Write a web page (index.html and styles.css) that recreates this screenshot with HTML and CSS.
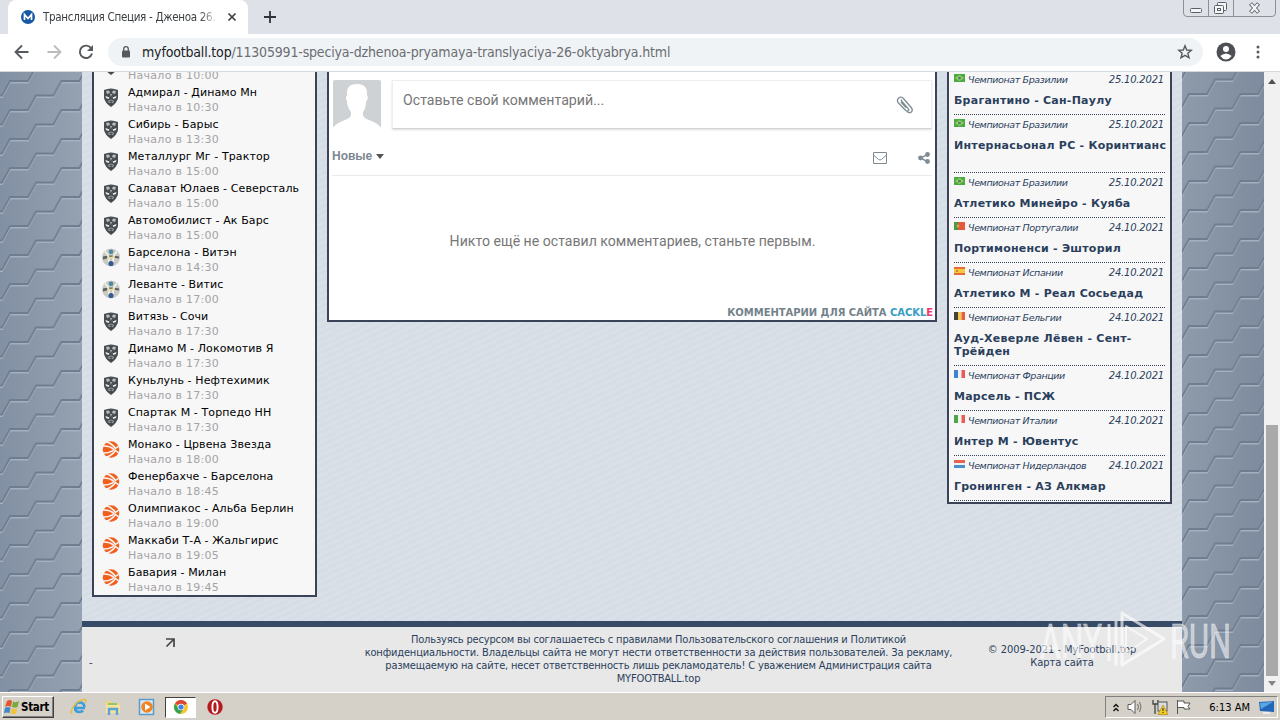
FILE: index.html
```html
<!DOCTYPE html>
<html lang="ru">
<head>
    <meta charset="UTF-8">
    <title>Трансляция Специя - Дженоа 26.10</title>
    <link rel="stylesheet" href="styles.css">
</head>
<body>
<svg class="defs" aria-hidden="true">
    <defs>
        <linearGradient id="steelLeft"><stop offset="0" stop-color="#8290a3"/><stop offset="1" stop-color="#95a2b2"/></linearGradient>
        <linearGradient id="steelRight"><stop offset="0" stop-color="#8e9bab"/><stop offset="1" stop-color="#7e8b9e"/></linearGradient>
        <pattern id="hexLeft" width="51.4" height="29" patternUnits="userSpaceOnUse" patternTransform="translate(10 9)">
            <g id="hexLines" fill="none" stroke-width="1.8">
                <path stroke="#a4b0be" d="M-8 16L0 1.5H18L26 -13M-8 45L0 30.5H18L26 16H43.4L51.4 1.5H60M43.4 45L51.4 30.5H60"/>
                <path stroke="#6f7d90" d="M-8 14.5L0 0H18L26 -14.5M-8 43.5L0 29H18L26 14.5H43.4L51.4 0H60M43.4 43.5L51.4 29H60"/>
            </g>
        </pattern>
        <pattern id="hexRight" width="51.4" height="29" patternUnits="userSpaceOnUse" patternTransform="translate(7 22)"><use href="#hexLines"/></pattern>
        <symbol id="khl" viewBox="0 0 16 19">
            <path d="M1 2Q8-1 15 2V10Q14 15 8 19Q2 15 1 10Z" fill="#4a4d50"/>
            <path d="M3 3L6 2.5L7 5L4 6ZM13 3L10 2.5L9 5L12 6Z" fill="#b9bcbe"/>
            <path d="M2.5 8L6.5 9.5L5.5 11L3 10ZM13.5 8L9.5 9.5L10.5 11L13 10Z" fill="#e6e6e6"/>
            <path d="M7 6H9L8 9ZM5 13L8 11.5L11 13L10 15H6Z" fill="#b2b5b8"/>
            <path d="M6 13.8H10M8 12V17" stroke="#333" stroke-width=".8"/>
        </symbol>
        <symbol id="vtb" viewBox="0 0 18 18">
            <circle cx="9" cy="9" r="9" fill="#c9cac5"/>
            <path d="M1 8Q9 6 17 8L17 10Q9 8 1 11Z" fill="#59645f"/>
            <path d="M3 3Q8 7 7 16M15 3Q10 7 11 16" stroke="#f3f1e5" stroke-width="1.8" fill="none"/>
            <circle cx="9" cy="3.3" r="2.3" fill="#4c8b9f"/><circle cx="9" cy="15" r="2.6" fill="#315b91"/>
            <path d="M5 9.500L13 8.500" stroke="#e9d99b" stroke-width="1.500"/>
        </symbol>
        <symbol id="euro" viewBox="0 0 18 18">
            <circle cx="9" cy="9" r="8.3" fill="#f0611d"/>
            <path d="M0 5.500Q8 5 12 9Q8 13 0 12.500M4 1Q10 3 13.500 8L18 4.500M4 17Q10 15 13.500 10L18 13.500" fill="none" stroke="#f7f7f8" stroke-width="1.500"/>
        </symbol>
        <symbol id="br" viewBox="0 0 11 8"><path fill="#4caa45" d="M0 0H11V8H0Z"/><path fill="#a3cc62" d="M5.5 1L10 4L5.5 7L1 4Z"/><circle cx="5.5" cy="4" r="1.6" fill="#438a70"/></symbol>
        <symbol id="pt" viewBox="0 0 11 8"><path fill="#e55a3b" d="M0 0H11V8H0Z"/><path fill="#4c9945" d="M0 0H4V8H0Z"/><circle cx="4" cy="4" r="1.4" fill="#d2a94d"/></symbol>
        <symbol id="es" viewBox="0 0 11 8"><path fill="#e66b37" d="M0 0H11V8H0Z"/><path fill="#f7c83b" d="M0 2H11V6H0Z"/><path fill="#c78636" d="M2 3H4V5H2Z"/></symbol>
        <symbol id="be" viewBox="0 0 11 8"><path fill="#444039" d="M0 0H4V8H0Z"/><path fill="#f4c84c" d="M4 0H7.5V8H4Z"/><path fill="#e65d42" d="M7.5 0H11V8H7.5Z"/></symbol>
        <symbol id="fr" viewBox="0 0 11 8"><path fill="#3d83cf" d="M0 0H4V8H0Z"/><path fill="#eef1f6" d="M4 0H7.5V8H4Z"/><path fill="#ed5a55" d="M7.5 0H11V8H7.5Z"/></symbol>
        <symbol id="it" viewBox="0 0 11 8"><path fill="#4aa84c" d="M0 0H4V8H0Z"/><path fill="#eff4ec" d="M4 0H7.5V8H4Z"/><path fill="#ed5a55" d="M7.5 0H11V8H7.5Z"/></symbol>
        <symbol id="nl" viewBox="0 0 11 8"><path fill="#e5654d" d="M0 0H11V3H0Z"/><path fill="#eef1f6" d="M0 3H11V5H0Z"/><path fill="#4990cc" d="M0 5H11V8H0Z"/></symbol>
    </defs>
</svg>

<header class="tabstrip">
    <div class="tab">
        <svg width="14" height="14" viewBox="0 0 14 14"><circle cx="7" cy="7" r="7" fill="#1757a5"/><path d="M3.5 10V4.5L7 8.5L10.500 4.500V10" fill="none" stroke="#fff" stroke-width="1.7"/></svg>
        <span class="tab-title">Трансляция Специя - Дженоа 26.10</span>
        <svg width="10" height="10" viewBox="0 0 10 10"><path d="M1.500 1.500L8.500 8.500M8.500 1.500L1.500 8.500" stroke="#3c4043" stroke-width="1.7"/></svg>
    </div>
    <svg class="new-tab" width="12" height="12" viewBox="0 0 12 12"><path d="M6 0V12M0 6H12" stroke="#30343a" stroke-width="1.8"/></svg>
    <svg class="win-buttons" width="94" height="17" viewBox="0 0 94 17">
        <path d="M.5 0V13Q.5 16.500 4 16.500H89Q92.500 16.500 92.500 13V0M25.500 0V16M50.500 0V16" fill="none" stroke="#8d9197"/>
        <rect x="7.500" y="8.500" width="11" height="4" rx="1" fill="#f5f6f8" stroke="#5c6066"/>
        <rect x="34.500" y="2.500" width="9" height="8" rx="1" fill="#f5f6f8" stroke="#5c6066"/>
        <rect x="31.500" y="5.500" width="9" height="8" rx="1" fill="#f5f6f8" stroke="#5c6066"/><rect x="34.500" y="8.500" width="3" height="2" fill="#fff" stroke="#5c6066"/>
        <path d="M67.500 3.500L75.500 12.500M75.500 3.500L67.500 12.500" stroke="#5c6066" stroke-width="4"/><path d="M68 4L75 12M75 4L68 12" stroke="#f5f6f8" stroke-width="2.200"/>
    </svg>
</header>

<nav class="toolbar">
    <svg width="16" height="16" viewBox="0 0 16 16"><path d="M14.500 8H2M8 1.500L1.500 8L8 14.500" fill="none" stroke="#56595d" stroke-width="1.800"/></svg>
    <svg width="16" height="16" viewBox="0 0 16 16"><path d="M1.500 8H14M8 1.500L14.500 8L8 14.500" fill="none" stroke="#b9bbbd" stroke-width="1.800"/></svg>
    <svg width="16" height="16" viewBox="0 0 16 16"><path d="M13.300 4.500A6.200 6.200 0 1 0 14 9.500" fill="none" stroke="#56595d" stroke-width="1.900"/><path d="M15 1V7H9Z" fill="#56595d"/></svg>
    <div class="omnibox">
        <svg width="10" height="12" viewBox="0 0 10 12"><rect x="1" y="4.500" width="8" height="7" rx="1" fill="#56595d"/><path d="M2.700 5V3A2.300 2.300 0 0 1 7.300 3V5" fill="none" stroke="#56595d" stroke-width="1.300"/></svg>
        <span class="url"><b>myfootball.top</b>/11305991-speciya-dzhenoa-pryamaya-translyaciya-26-oktyabrya.html</span>
        <svg width="16" height="16" viewBox="0 0 16 16"><path d="M8 1.800L9.700 6L14.300 6.300L10.800 9.200L12 13.800L8 11.300L4 13.800L5.200 9.200L1.700 6.300L6.300 6Z" fill="none" stroke="#56595d" stroke-width="1.400"/></svg>
    </div>
    <svg width="20" height="20" viewBox="0 0 20 20"><circle cx="10" cy="10" r="9.500" fill="#4c5054"/><circle cx="10" cy="7" r="3" fill="#fff"/><path d="M4.300 14Q10 9 15.700 14Q13 17.500 10 17.500T4.300 14Z" fill="#fff"/></svg>
    <svg class="dots" width="4" height="14" viewBox="0 0 4 14"><g fill="#56595d"><circle cx="2" cy="2" r="1.500"/><circle cx="2" cy="7" r="1.500"/><circle cx="2" cy="12" r="1.500"/></g></svg>
</nav>

<main class="page">
    <svg class="side" width="82" height="620"><rect width="82" height="620" fill="url(#steelLeft)"/><rect width="82" height="620" fill="url(#hexLeft)"/></svg>

    <div class="site">
        <div class="columns">
            <section class="panel games">
                <ul>
                    <li><svg><use href="#khl"/></svg><div><a></a><small>Начало в 10:00</small></div></li>
                    <li><svg><use href="#khl"/></svg><div><a>Адмирал - Динамо Мн</a><small>Начало в 10:30</small></div></li>
                    <li><svg><use href="#khl"/></svg><div><a>Сибирь - Барыс</a><small>Начало в 13:30</small></div></li>
                    <li><svg><use href="#khl"/></svg><div><a>Металлург Мг - Трактор</a><small>Начало в 15:00</small></div></li>
                    <li><svg><use href="#khl"/></svg><div><a>Салават Юлаев - Северсталь</a><small>Начало в 15:00</small></div></li>
                    <li><svg><use href="#khl"/></svg><div><a>Автомобилист - Ак Барс</a><small>Начало в 15:00</small></div></li>
                    <li><svg><use href="#vtb"/></svg><div><a>Барселона - Витэн</a><small>Начало в 14:30</small></div></li>
                    <li><svg><use href="#vtb"/></svg><div><a>Леванте - Витис</a><small>Начало в 17:00</small></div></li>
                    <li><svg><use href="#khl"/></svg><div><a>Витязь - Сочи</a><small>Начало в 17:30</small></div></li>
                    <li><svg><use href="#khl"/></svg><div><a>Динамо М - Локомотив Я</a><small>Начало в 17:30</small></div></li>
                    <li><svg><use href="#khl"/></svg><div><a>Куньлунь - Нефтехимик</a><small>Начало в 17:30</small></div></li>
                    <li><svg><use href="#khl"/></svg><div><a>Спартак М - Торпедо НН</a><small>Начало в 17:30</small></div></li>
                    <li><svg><use href="#euro"/></svg><div><a>Монако - Црвена Звезда</a><small>Начало в 18:00</small></div></li>
                    <li><svg><use href="#euro"/></svg><div><a>Фенербахче - Барселона</a><small>Начало в 18:45</small></div></li>
                    <li><svg><use href="#euro"/></svg><div><a>Олимпиакос - Альба Берлин</a><small>Начало в 19:00</small></div></li>
                    <li><svg><use href="#euro"/></svg><div><a>Маккаби Т-А - Жальгирис</a><small>Начало в 19:05</small></div></li>
                    <li><svg><use href="#euro"/></svg><div><a>Бавария - Милан</a><small>Начало в 19:45</small></div></li>
                </ul>
            </section>

            <section class="panel comments">
                <div class="comment-form">
                    <svg width="48" height="48" viewBox="0 0 48 48"><rect width="48" height="48" rx="2" fill="#cfd2d5"/><path d="M0 48Q3 43 12 40Q19 38 18 32Q14 27 14 21Q12 18 14 15Q13 4 24 4Q35 4 34 15Q36 18 33 22Q33 28 30 32Q29 38 36 40Q45 43 48 48Z" fill="#fff"/></svg>
                    <div class="comment-box">
                        <span>Оставьте свой комментарий...</span>
                        <svg width="18" height="18" viewBox="0 0 18 18"><path d="M6 5.500L12 12.500Q13.500 14 12.300 14.800Q11 15.800 9.500 14.300L2.500 7Q.3 4.300 2.500 2.300Q5-.2 7.600 2.700L15.200 11.500Q17.300 14.300 15.300 16Q13.400 17.600 11 15.500M6 5.500Q4.800 4.300 5.700 3.500M5 6L10 11.500" fill="none" stroke="#7d8b91" stroke-width="1.300"/></svg>
                    </div>
                </div>
                <div class="comment-tools">
                    <b>Новые</b><i class="caret"></i>
                    <svg class="mail" width="14" height="12" viewBox="0 0 14 12"><path d="M.5.5H13.500V11.500H.5ZM.5 3L5.500 7.500Q7 8.500 8.500 7.500L13.500 3" fill="none" stroke="#7f8c94"/></svg>
                    <svg class="share" width="12" height="12" viewBox="0 0 12 12"><path d="M10 2.300L2.500 6L10 9.800" fill="none" stroke="#7f8c94" stroke-width="1.500"/><g fill="#7f8c94"><circle cx="9.500" cy="2.500" r="2.400"/><circle cx="2.500" cy="6" r="2.400"/><circle cx="9.500" cy="9.500" r="2.400"/></g></svg>
                </div>
                <p class="empty">Никто ещё не оставил комментариев, станьте первым.</p>
                <div class="credit">Комментарии для сайта <span>Cackl</span><em>e</em></div>
            </section>

            <section class="panel results">
                <article><div class="meta"><svg><use href="#br"/></svg><span>Чемпионат Бразилии</span><time>25.10.2021</time></div><h4>Брагантино - Сан-Паулу</h4></article>
                <article class="tall"><div class="meta"><svg><use href="#br"/></svg><span>Чемпионат Бразилии</span><time>25.10.2021</time></div><h4>Интернасьонал РС - Коринтианс</h4></article>
                <article><div class="meta"><svg><use href="#br"/></svg><span>Чемпионат Бразилии</span><time>25.10.2021</time></div><h4>Атлетико Минейро - Куяба</h4></article>
                <article><div class="meta"><svg><use href="#pt"/></svg><span>Чемпионат Португалии</span><time>24.10.2021</time></div><h4>Портимоненси - Эшторил</h4></article>
                <article><div class="meta"><svg><use href="#es"/></svg><span>Чемпионат Испании</span><time>24.10.2021</time></div><h4>Атлетико М - Реал Сосьедад</h4></article>
                <article class="tall"><div class="meta"><svg><use href="#be"/></svg><span>Чемпионат Бельгии</span><time>24.10.2021</time></div><h4>Ауд-Хеверле Лёвен - Сент-<br>Трёйден</h4></article>
                <article><div class="meta"><svg><use href="#fr"/></svg><span>Чемпионат Франции</span><time>24.10.2021</time></div><h4>Марсель - ПСЖ</h4></article>
                <article><div class="meta"><svg><use href="#it"/></svg><span>Чемпионат Италии</span><time>24.10.2021</time></div><h4>Интер М - Ювентус</h4></article>
                <article><div class="meta"><svg><use href="#nl"/></svg><span>Чемпионат Нидерландов</span><time>24.10.2021</time></div><h4>Гронинген - АЗ Алкмар</h4></article>
            </section>
        </div>

        <footer class="site-footer">
            <div class="counter">
                <svg width="10" height="10" viewBox="0 0 10 10"><path d="M1 1H9V9M9 1L1.500 8.500" fill="none" stroke="#444" stroke-width="1.700"/></svg>
                <span>-</span>
            </div>
            <p class="rules">Пользуясь ресурсом вы соглашаетесь с правилами Пользовательского соглашения и Политикой<br>конфиденциальности. Владельцы сайта не могут нести ответственности за действия пользователей. За рекламу,<br>размещаемую на сайте, несет ответственность лишь рекламодатель! С уважением Администрация сайта<br>MYFOOTBALL.top</p>
            <p class="copyright">© 2009-2021 - MyFootball.top<br>Карта сайта</p>
        </footer>
    </div>

    <svg class="side" width="82" height="620"><rect width="82" height="620" fill="url(#steelRight)"/><rect width="82" height="620" fill="url(#hexRight)"/></svg>
    <div class="scrollbar"><i class="up"></i><i class="thumb"></i><i class="down"></i></div>

    <svg class="watermark" width="200" height="70" viewBox="0 0 200 70">
        <g fill="#fff" fill-opacity=".55" stroke="#fff" stroke-opacity=".4">
            <text x="4" y="51" textLength="62" lengthAdjust="spacingAndGlyphs">ANY</text>
            <text x="134" y="51" textLength="61" lengthAdjust="spacingAndGlyphs">RUN</text>
        </g>
        <g fill="none" stroke="#fff" stroke-opacity=".65" stroke-width="3" stroke-linejoin="round">
            <path d="M73 54V17M80 59V14M86 6L128 32L86 58Z"/>
            <path d="M90 19L111 32L90 46Z" stroke-width="2"/>
        </g>
    </svg>
</main>

<div class="taskbar">
    <button class="start"><svg width="16" height="16" viewBox="0 0 16 16"><path d="M3 2Q6 0 8 2L7 8Q4 6 1 8Z" fill="#e2582c"/><path d="M9 2.500Q12 4 15 2L13.500 8Q11 9 8 8Z" fill="#74ad3c"/><path d="M1 9Q4 7 6.500 9L5.500 14Q3 13 0 14Z" fill="#4187cc"/><path d="M7.700 9Q10 11 13.200 9L12 14.500Q9 16 6.500 14.500Z" fill="#f1c33b"/></svg>Start</button>
    <div class="quick">
        <svg width="18" height="18" viewBox="0 0 18 18"><path d="M15 10H5Q5.500 14 9.300 14Q12 14 13 12.500M5 9Q5.500 4.500 9.500 4.500Q14 4.500 14.500 9" fill="none" stroke="#3b9fdb" stroke-width="2.700"/><path d="M2.500 15.500Q-.5 15.500 3 9Q9 1 15 1.500Q17 2 15 5" fill="none" stroke="#e8bd44" stroke-width="1.500"/></svg>
        <svg width="18" height="18" viewBox="0 0 18 18"><path d="M2 3H7L8 5H15V15H2Z" fill="#efd77a"/><path d="M4 5H13V8H4Z" fill="#94c56c"/><path d="M2 7H16V15H2Z" fill="#f6e597"/><path d="M5 17V11H13V17" fill="none" stroke="#5aa5d7" stroke-width="2.500"/></svg>
        <svg width="18" height="18" viewBox="0 0 18 18"><rect x="1.500" y="1.500" width="14" height="15" fill="#d8e9f6" stroke="#5b9bcc" stroke-width="1.500"/><circle cx="9" cy="9" r="5.800" fill="#ef8421"/><path d="M7 5.500L12.500 9L7 12.500Z" fill="#fff"/></svg>
        <span class="active"><svg width="14" height="14" viewBox="0 0 14 14"><circle cx="7" cy="7" r="7" fill="#f3c82e"/><path d="M7 7L1 3.500A7 7 0 0 1 13 3.500Z" fill="#dd4536"/><path d="M1 3.500A7 7 0 0 0 6 14L9.500 8.500L5 9Z" fill="#36a252"/><circle cx="7" cy="7" r="3.300" fill="#fff"/><circle cx="7" cy="7" r="2.600" fill="#4080e8"/></svg></span>
        <svg width="18" height="18" viewBox="0 0 18 18"><circle cx="9" cy="9" r="7.700" fill="#b5181d"/><ellipse cx="9" cy="9" rx="2.600" ry="5.800" fill="#b5181d" stroke="#fff" stroke-width="1.900"/></svg>
    </div>
    <div class="tray">
        <svg width="6" height="9" viewBox="0 0 6 9"><path d="M.5 4L3 1.500L5.500 4M.5 8L3 5.500L5.500 8" fill="none" stroke="#111" stroke-width="1.400"/></svg>
        <svg width="17" height="16" viewBox="0 0 17 16"><path d="M1 5.500H4L8 1.500V14.500L4 10.500H1Z" fill="#fff" stroke="#5c5c5c"/><path d="M10.500 5Q12.500 8 10.500 11M12.500 3Q15.500 8 12.500 13" fill="none" stroke="#6e6e6e"/></svg>
        <svg width="16" height="16" viewBox="0 0 16 16"><path d="M1 1V5H3V15M6 1V5H3" fill="none" stroke="#444" stroke-width="1.300"/><rect x="6" y="3" width="9" height="9" fill="#d7dde2" stroke="#555"/><path d="M11 6L16 15.500H6Z" fill="#f3cc27" stroke="#b58b0c" stroke-width=".7"/><path d="M11 9V12M11 13V14" stroke="#222"/></svg>
        <svg width="16" height="16" viewBox="0 0 16 16"><path d="M1.500 1V15M2 2H8V4H14L12 7.500L14 10H8V8.500H2" fill="#fff" stroke="#555"/></svg>
        <span>6:13 AM</span>
        <svg width="15" height="13" viewBox="0 0 15 13"><path d="M0 1L15 0V11L1 10Z" fill="#2166b8"/><path d="M1 2L14 1L2 8Z" fill="#5ba6e3"/><path d="M4 12H11" stroke="#e9edf0" stroke-width="2"/></svg>
    </div>
</div>
</body>
</html>
```
FILE: styles.css
```css
* {
    box-sizing: border-box;
}
body {
    margin: 0;
    width: 1280px;
    height: 720px;
    overflow: hidden;
    display: flex;
    flex-direction: column;
    font-family: "DejaVu Sans", sans-serif;
    font-size: 11px;
    color: #2b3f5c;
}
p, h4, ul {
    margin: 0;
    padding: 0;
}
svg {
    display: block;
    flex: none;
}
.defs {
    position: absolute;
    width: 0;
    height: 0;
}

/* browser chrome */
.tabstrip {
    height: 34px;
    flex: none;
    display: flex;
    align-items: center;
    background: #dee1e8;
    padding-left: 8px;
}
.tab {
    width: 240px;
    height: 34px;
    padding: 0 11px 0 13px;
    display: flex;
    align-items: center;
    background: #fff;
    border-radius: 8px 8px 0 0;
}
.tab-title {
    flex: 1;
    margin: 0 9px 0 8px;
    overflow: hidden;
    white-space: nowrap;
    font-family: "DejaVu Sans Condensed", "DejaVu Sans", sans-serif;
    font-size: 11.5px;
    letter-spacing: -0.3px;
    color: #3c4043;
    -webkit-mask-image: linear-gradient(to right, #000 90%, transparent);
}
.new-tab {
    margin-left: 16px;
}
.win-buttons {
    margin: 0 3px 0 auto;
    align-self: flex-start;
}
.toolbar {
    height: 38px;
    flex: none;
    display: flex;
    align-items: center;
    gap: 16px;
    padding: 0 20px 2px 14px;
    background: #fff;
    border-bottom: 1px solid #d6d9dc;
}
.omnibox {
    flex: 1;
    height: 28px;
    margin: 0 -3px 0 -2px;
    padding: 0 10px 0 13px;
    display: flex;
    align-items: center;
    border-radius: 14px;
    background: #f0f3f5;
}
.url {
    flex: 1;
    margin-left: 11px;
    font-family: "DejaVu Sans Condensed", "DejaVu Sans", sans-serif;
    font-size: 14px;
    letter-spacing: -0.17px;
    color: #6a6e73;
}
.url b {
    font-weight: normal;
    color: #202124;
}
.dots {
    margin-left: 4px;
}

/* page */
.page {
    position: relative;
    height: 620px;
    flex: none;
    display: flex;
    overflow: hidden;
}
.site {
    width: 1100px;
    display: flex;
    flex-direction: column;
    background: repeating-linear-gradient(155deg, #d7dde5 0 3px, #dae0e8 3px 6px);
}
.columns {
    height: 549px;
    display: flex;
    align-items: flex-start;
    gap: 10px;
    padding: 0 10px;
}
.panel {
    flex: none;
    border: 2px solid #3a4358;
    border-top: 0;
    background: #f7f7f8;
    overflow: hidden;
}
.games {
    width: 225px;
}
.games ul {
    margin-top: -21px;
    list-style: none;
}
.games li {
    height: 32px;
    display: flex;
    padding: 2px 0 0 8px;
    line-height: 15px;
    letter-spacing: 0.1px;
    white-space: nowrap;
}
.games svg {
    width: 18px;
    height: 19px;
    margin: 3px 8px 0 0;
}
.games a {
    display: block;
    height: 15px;
    color: #000;
}
.games small {
    display: block;
    font-size: 11px;
    letter-spacing: 0.28px;
    color: #a3a3a3;
}

.comments {
    width: 610px;
    height: 250px;
    background: #fff;
    padding: 8px 3px 0 4px;
    font-family: Roboto, sans-serif;
}
.comment-form {
    display: flex;
    gap: 11px;
}
.comment-box {
    flex: 1;
    height: 49px;
    padding: 10px 17px 0 10px;
    display: flex;
    justify-content: space-between;
    border: 1px solid #eee;
    border-bottom-color: #d2d2d2;
    box-shadow: 0 1px 2px #ddd;
    font-size: 14.15px;
    line-height: 18px;
    color: #777;
}
.comment-box svg {
    margin-top: 5px;
}
.comment-tools {
    height: 47px;
    margin-left: -1px;
    padding: 8px 2px 0 0;
    display: flex;
    align-items: center;
    border-bottom: 1px solid #eaeaea;
    font-family: "Liberation Sans", sans-serif;
    font-size: 12px;
    color: #7d8790;
}
.caret {
    margin-left: 4px;
    border: 4px solid transparent;
    border-top: 5px solid #555;
    border-bottom: 0;
}
.mail {
    margin: 3px 31px 0 auto;
}
.share {
    margin-top: 3px;
}
.empty {
    height: 131px;
    line-height: 131px;
    text-align: center;
    font-size: 14.1px;
    color: #777;
}
.credit {
    height: 12px;
    margin-right: -1px;
    text-align: right;
    font-family: "DejaVu Sans", sans-serif;
    font-size: 10px;
    font-weight: bold;
    line-height: 12px;
    letter-spacing: -0.05px;
    text-transform: uppercase;
    color: #74828c;
}
.credit span {
    color: #35a0c4;
}
.credit em {
    font-style: normal;
    color: #ee3972;
}

.results {
    width: 225px;
    padding: 0 5px 1px;
}
.results article {
    height: 45px;
    border-bottom: 1px dotted #35425a;
}
.results article:first-child {
    margin-top: -2px;
}
.results .tall {
    height: 58px;
}
.meta {
    height: 18px;
    margin-bottom: 6px;
    display: flex;
    align-items: center;
    font-size: 9.5px;
    font-style: italic;
    letter-spacing: -0.38px;
}
.meta svg {
    width: 11px;
    height: 8px;
    margin: 0 3px 3px 0;
}
.meta time {
    margin: 0 1px 0 auto;
    font-size: 10px;
    letter-spacing: -0.2px;
}
.results h4 {
    font-size: 11px;
    line-height: 13px;
    letter-spacing: 0.24px;
    white-space: nowrap;
}

.site-footer {
    height: 71px;
    display: flex;
    border-top: 6px solid #374a66;
    background: #e8e8e8;
    font-family: "DejaVu Sans Condensed", "DejaVu Sans", sans-serif;
    line-height: 13px;
    text-align: center;
    white-space: nowrap;
}
.counter {
    width: 276px;
    padding: 11px 0 0 7px;
    text-align: left;
}
.counter svg {
    margin: 0 0 8px 76px;
}
.rules {
    width: 601px;
    padding-top: 6px;
    letter-spacing: -0.16px;
}
.copyright {
    width: 206px;
    padding-top: 16px;
    letter-spacing: -0.05px;
}

.scrollbar {
    width: 16px;
    display: flex;
    flex-direction: column;
    align-items: center;
    background: #f1f1f1;
}
.scrollbar .up {
    margin: 7px 0 341px;
    border: 4px solid transparent;
    border-top: 0;
    border-bottom: 5px solid #505050;
}
.scrollbar .thumb {
    width: 12px;
    height: 251px;
    background: #a9a9a9;
}
.scrollbar .down {
    margin-top: 5px;
    border: 4px solid transparent;
    border-top: 5px solid #858585;
    border-bottom: 0;
}
.watermark {
    position: absolute;
    left: 1036px;
    top: 535px;
    font-family: Roboto, sans-serif;
    font-size: 49px;
}

/* taskbar */
.taskbar {
    height: 28px;
    flex: none;
    display: flex;
    align-items: center;
    padding: 1px 2px 0;
    background: #d5d0c8;
    border-top: 1px solid #fff;
    color: #000;
}
.start {
    width: 52px;
    height: 22px;
    padding: 0 1px;
    display: flex;
    align-items: center;
    gap: 1px;
    border: 1px solid;
    border-color: #fff #404040 #404040 #fff;
    box-shadow: inset -1px -1px #808080;
    background: #d5d0c8;
    font: bold 11.5px "DejaVu Sans Condensed", "DejaVu Sans", sans-serif;
    letter-spacing: -0.3px;
}
.quick {
    display: flex;
    align-items: center;
    gap: 16px;
    margin-left: 16px;
}
.quick .active {
    width: 31px;
    height: 21px;
    margin: 0 -6px 0 -7px;
    display: flex;
    align-items: center;
    justify-content: center;
    background: #fff;
    border: 1px solid;
    border-color: #404040 #fff #fff #404040;
}
.tray {
    width: 173px;
    height: 22px;
    margin-left: auto;
    padding: 0 3px 0 7px;
    display: flex;
    align-items: center;
    gap: 8px;
    border: 1px solid;
    border-color: #808080 #fff #fff #808080;
    font-family: "DejaVu Sans Condensed", "DejaVu Sans", sans-serif;
    white-space: nowrap;
}
.tray span {
    margin: 0 1px 0 auto;
    letter-spacing: 0;
}
```
